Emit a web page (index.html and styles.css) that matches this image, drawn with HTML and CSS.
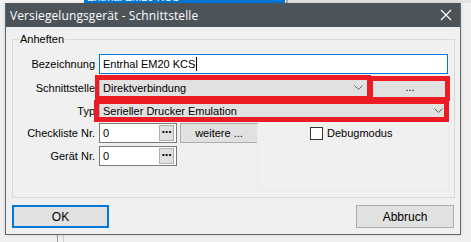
FILE: index.html
```html
<!DOCTYPE html>
<html>
<head>
<meta charset="utf-8">
<link rel="stylesheet" href="styles.css">
</head>
<body>
<div class="bg-top">
  <span class="bg-sel">Entrhal EM20 KCS</span>
  <span class="bg-right"></span>
</div>
<div class="bg-bottom"><span class="ln1"></span><span class="ln2"></span></div>

<div class="dialog">
  <div class="titlebar">
    <span class="title">Versiegelungsgerät - Schnittstelle</span>
    <svg class="close" width="12" height="12" viewBox="0 0 12 12"><path d="M1 1 L11 11 M11 1 L1 11" stroke="#fff" stroke-width="1.2" fill="none"/></svg>
  </div>
  <div class="content">
    <div class="group">
      <span class="legend">Anheften</span>
      <div class="form">
        <span class="lbl">Bezeichnung</span>
        <div class="input focus"><span>Entrhal EM20 KCS</span><span class="caret"></span></div>

        <span class="lbl">Schnittstelle</span>
        <div class="row">
          <div class="combo grow"><span>Direktverbindung</span><svg class="chev" width="9" height="5" viewBox="0 0 9 5"><path d="M0.5 0.5 L4.5 4.5 L8.5 0.5" stroke="#606060" fill="none"/></svg></div>
          <div class="btn more">...</div>
        </div>

        <span class="lbl">Typ</span>
        <div class="combo"><span>Serieller Drucker Emulation</span><svg class="chev" width="9" height="5" viewBox="0 0 9 5"><path d="M0.5 0.5 L4.5 4.5 L8.5 0.5" stroke="#606060" fill="none"/></svg></div>

        <span class="lbl">Checkliste Nr.</span>
        <div class="row">
          <div class="input small"><span>0</span><span class="ell">&middot;&middot;&middot;</span></div>
          <div class="btn weitere">weitere ...</div>
          <div class="check"><span class="box"></span><span>Debugmodus</span></div>
        </div>

        <span class="lbl">Gerät Nr.</span>
        <div class="row">
          <div class="input small"><span>0</span><span class="ell">&middot;&middot;&middot;</span></div>
        </div>
      </div>
      <div class="panel"></div>
    </div>
    <div class="buttons">
      <div class="btn action default">OK</div>
      <div class="btn action">Abbruch</div>
    </div>
  </div>
</div>

<div class="mark m1"></div>
<div class="mark m2"></div>
<div class="mark m3"></div>
</body>
</html>
```

FILE: styles.css
```css
* { box-sizing: border-box; }
html, body { margin: 0; padding: 0; }
body {
  width: 471px;
  height: 242px;
  position: relative;
  overflow: hidden;
  background: #f0f0f0;
  font-family: "Liberation Sans", Arial, sans-serif;
  font-size: 11px;
  color: #000;
}

/* background window pieces */
.bg-top {
  position: absolute;
  left: 0; top: 0;
  width: 471px; height: 3px;
  background: #f7f7f7;
}
.bg-sel {
  position: absolute;
  left: 84px; top: -9px;
  width: 201px; height: 12px;
  line-height: 12px;
  padding-left: 3px;
  background: #0078d7;
  color: #fff;
  font-size: 11px;
}
.bg-right {
  position: absolute;
  left: 286px; top: 0;
  width: 185px; height: 3px;
  background: #e3e3e3;
  border-left: 2px solid #a8a8a8;
}
.bg-bottom {
  position: absolute;
  left: 0; top: 235px;
  width: 471px; height: 7px;
}
.bg-bottom .ln1 {
  position: absolute; left: 57px; top: 0; width: 1px; height: 7px; background: #9a9a9a;
}
.bg-bottom .ln2 {
  position: absolute; left: 63px; top: 0; width: 1px; height: 7px; background: #cfcfcf;
}

/* dialog window */
.dialog {
  position: absolute;
  left: 5px; top: 3px;
  width: 456px; height: 232px;
  background: #f0f0f0;
  border: 1px solid #5f656a;
  border-top: none;
  box-shadow: 0 0 4px rgba(0,0,0,0.12);
  display: flex;
  flex-direction: column;
}
.titlebar {
  height: 24px;
  background: #4c5359;
  display: flex;
  align-items: center;
  justify-content: space-between;
  padding: 0 8px 0 4px;
  flex: none;
}
.title {
  color: #fff;
  font-family: "Open Sans", "Noto Sans", sans-serif;
  font-size: 12px;
  letter-spacing: 0.1px;
  padding-top: 1px;
}
.close { display: block; }

.content {
  padding: 12px 5px 0 6px;
  display: flex;
  flex-direction: column;
}

.group {
  position: relative;
  border: 1px solid #d9d9d9;
  height: 159px;
  padding: 14px 6px 0 0;
}
.legend {
  position: absolute;
  left: 6px; top: -7px;
  padding: 0 1px;
  background: #f0f0f0;
  line-height: 13px;
  font-size: 11px;
}
.panel {
  position: absolute;
  left: 244px; top: 84px;
  width: 192px; height: 68px;
  border: 1px solid #ebebeb;
  border-top: none;
  pointer-events: none;
}

.form {
  display: grid;
  grid-template-columns: 82px 1fr;
  grid-auto-rows: 21px;
  column-gap: 4px;
  row-gap: 2px;
}
.lbl {
  text-align: right;
  align-self: center;
  white-space: nowrap;
}
.form > .lbl:nth-of-type(1),
.form > .lbl:nth-of-type(4),
.form > .lbl:nth-of-type(5) { align-self: start; line-height: 20px; }

.row {
  display: flex;
  align-items: flex-start;
}

.input {
  height: 20px;
  background: #fff;
  border: 1px solid #7a7a7a;
  display: flex;
  align-items: center;
  padding-left: 3px;
  position: relative;
}
.input.focus { border-color: #0078d7; }
.caret {
  display: inline-block;
  width: 1px;
  height: 14px;
  background: #000;
  margin-left: 1px;
}
.input.small { width: 78px; }
.ell {
  position: absolute;
  right: 2px; top: 1px;
  width: 15px; height: 16px;
  background: #e1e1e1;
  border: 1px solid #adadad;
  font-weight: bold;
  font-size: 13px;
  line-height: 12px;
  text-align: center;
  letter-spacing: -1px;
}

.combo {
  height: 21px;
  background: #e1e1e1;
  border: 1px solid #adadad;
  display: flex;
  align-items: center;
  justify-content: space-between;
  padding: 0 4px 0 3px;
}
.combo.grow { flex: 1; }
.chev { display: block; }

.btn {
  background: #e1e1e1;
  border: 1px solid #adadad;
  display: flex;
  align-items: center;
  justify-content: center;
}
.btn.more {
  width: 76px; height: 21px;
  margin-left: 4px;
  padding-bottom: 2px;
}
.btn.weitere {
  width: 78px; height: 20px;
  margin-left: 3px;
}

.check {
  display: flex;
  align-items: center;
  margin-left: 52px;
  height: 20px;
}
.check .box {
  width: 13px; height: 13px;
  background: #fff;
  border: 1px solid #333;
  margin-right: 4px;
}

.buttons {
  display: flex;
  justify-content: space-between;
  margin-top: 7px;
  padding-right: 1px;
}
.btn.action {
  width: 98px;
  height: 23px;
  font-size: 12px;
}
.btn.action.default {
  width: 97px;
  border: 2px solid #0078d7;
}

/* red annotation frames */
.mark {
  position: absolute;
  border: 5px solid #ed1c24;
}
.m1 { left: 95px; top: 75px; width: 276px; height: 26px; border-width: 5px 4px 5px 4px; }
.m2 { left: 370px; top: 76px; width: 80px; height: 25px; border-width: 5px 5px 4px 3px; }
.m3 { left: 94px; top: 100px; width: 355px; height: 22px; border-width: 4px 5px 5px 5px; }
```
